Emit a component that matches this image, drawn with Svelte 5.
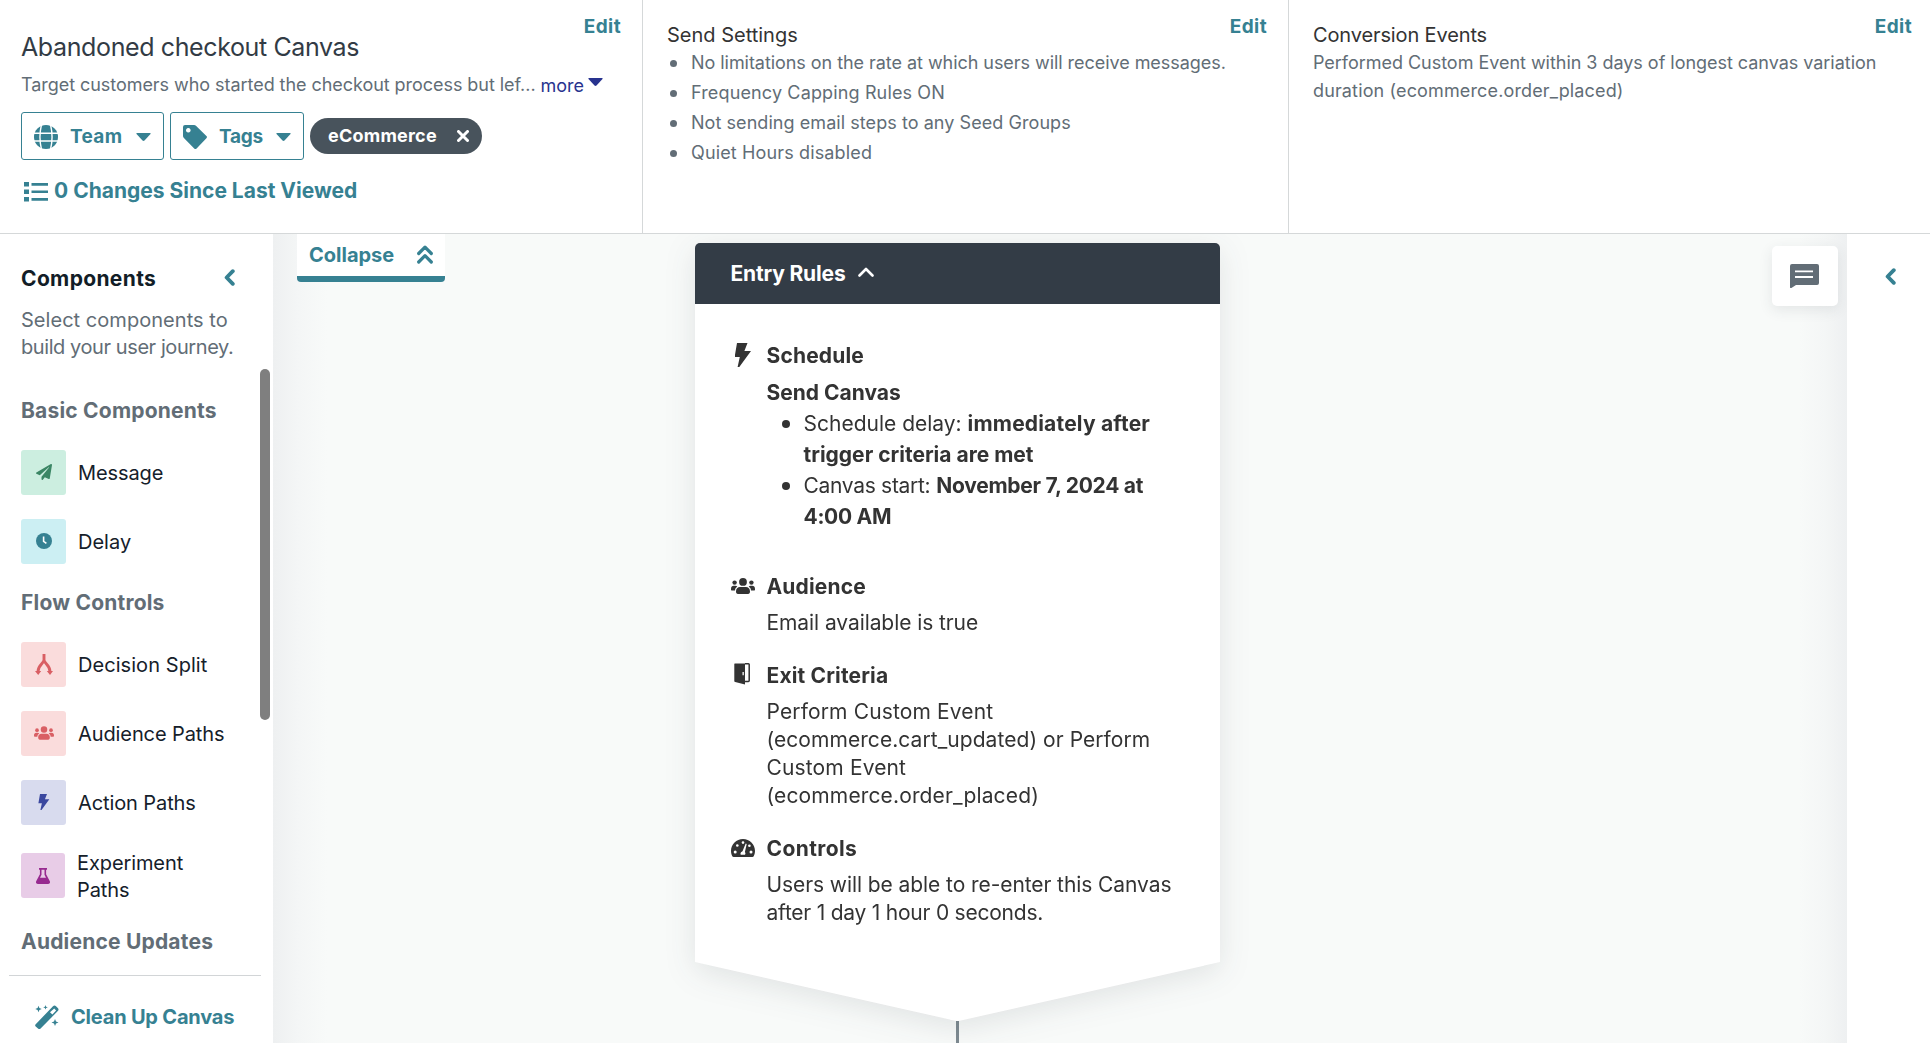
<script>
  const bolt = 'M6 0h10.5L13.4 8H20L8.3 24H6.6L8.8 14H3.6Z';
  const basics = [
    { label: 'Message', icon: 'plane', tone: 'green', fit: 'tight1' },
    { label: 'Delay', icon: 'clock', tone: 'cyan', fit: '' }
  ];
  const flows = [
    { label: 'Decision Split', icon: 'split', tone: 'red', fit: 'loose' },
    { label: 'Audience Paths', icon: 'users', tone: 'red', fit: 'tight1' },
    { label: 'Action Paths', icon: 'bolt', tone: 'blue', fit: 'tight1' },
    { label: 'Experiment Paths', icon: 'flask', tone: 'purple', fit: 'tight1' }
  ];
</script>

{#snippet glyph(name)}
  {#if name === 'plane'}
    <svg class="g16" viewBox="0 0 512 512"><path d="M476 3 12 271c-18 11-16 35 2 43l106 44L408 105c6-5 13 3 9 8L176 407v80c0 24 28 33 42 16l64-77 125 52c14 6 30-3 33-18L512 28c3-20-18-35-36-25z" /></svg>
  {:else if name === 'clock'}
    <svg class="g16" viewBox="0 0 16 16"><circle cx="8" cy="8" r="8" /><path class="cut" d="M7.6 3.4v5l2.8 1.9" /></svg>
  {:else if name === 'split'}
    <svg class="gsplit" viewBox="0 0 18 21"><path class="ln" d="M9 0v6c0 3.300-6 5-6 11.500M9 6c0 3.300 6 5 6 11.500" /><path d="M0 17h6.200l-3 4zM11.800 17H18l-3 4z" /></svg>
  {:else if name === 'users'}
    <svg class="gusers" viewBox="0 0 24 16"><circle cx="12" cy="3.900" r="3.900" /><circle cx="3.600" cy="4.600" r="2.200" /><circle cx="20.400" cy="4.600" r="2.200" /><path d="M5 13.500C5 10.500 6.700 9 9 9h6c2.300 0 4 1.500 4 4.500 0 1.500-.6 2.500-2 2.500H7c-1.400 0-2-1-2-2.500zM0 11c0-2 1.100-3.200 2.800-3.200h1.500c.9 0 1.500.3 2 .7C4.700 9.600 4 11 4 12.600H1c-.7 0-1-.4-1-1zM24 11c0-2-1.100-3.200-2.800-3.200h-1.500c-.9 0-1.500.3-2 .7 1.600 1.100 2.300 2.500 2.300 4.100h3c.7 0 1-.4 1-1z" /></svg>
  {:else if name === 'bolt'}
    <svg class="g16" viewBox="0 0 24 24"><path d={bolt} /></svg>
  {:else if name === 'flask'}
    <svg class="g16 flask" viewBox="0 0 14 16"><path fill-rule="evenodd" d="M3 0h8v1.700h-.9v4.600l3.600 6.700c.8 1.500.1 3-1.500 3H1.800c-1.600 0-2.300-1.500-1.500-3l3.600-6.700V1.700H3zM5.500 1.700v5L4 9.700h6L8.500 6.700v-5z" /></svg>
  {/if}
{/snippet}

{#snippet row(item)}
  <div class="item {item.tone}">
    <span class="tile">{@render glyph(item.icon)}</span>
    <span class="label {item.fit}">{item.label}</span>
  </div>
{/snippet}

<div class="page">
  <header>
    <section class="summary">
      <a class="edit">Edit</a>
      <h1>Abandoned checkout Canvas</h1>
      <div class="desc">
        <span class="blurb">Target customers who started the checkout process but lef...</span>
        <span class="more">more</span>
        <svg class="morecaret" viewBox="0 0 15 8"><path d="M1 0h13q1 .3.500 1L8.500 7.500q-1 .8-2 0L.5 1Q0 .3 1 0z" /></svg>
      </div>
      <div class="chips">
        <button class="team">
          <svg class="i24" viewBox="0 0 24 24"><circle cx="12" cy="12" r="12" /><path class="cutline" d="M0 8.200h24M0 16h24M7.400 0C5.700 7 5.700 17 7.400 24M16.600 0c1.700 7 1.700 17 0 24" /></svg>
          <span>Team</span>
          <svg class="caret" viewBox="0 0 15 8"><path d="M1 0h13q1 .3.500 1L8.500 7.500q-1 .8-2 0L.5 1Q0 .3 1 0z" /></svg>
        </button>
        <button class="tags">
          <svg class="i24" viewBox="0 0 24 24"><path fill-rule="evenodd" d="M0 2Q0 0 2 0h9q1.300 0 2.200.9l10.200 10q1.200 1.200 0 2.400L13.600 23.400q-1.200 1.100-2.400 0L.9 13Q0 12.200 0 11zM5.300 3a2.300 2.300 0 1 0 .01 0z" /></svg>
          <span>Tags</span>
          <svg class="caret" viewBox="0 0 15 8"><path d="M1 0h13q1 .3.500 1L8.500 7.500q-1 .8-2 0L.5 1Q0 .3 1 0z" /></svg>
        </button>
        <span class="pill"><span>eCommerce</span><svg viewBox="0 0 12 12"><path d="M1.500 1.500l9 9M10.500 1.500l-9 9" /></svg></span>
      </div>
      <a class="changes">
        <svg viewBox="0 0 24 20"><path d="M0 0h5v4.600H0zM0 7.500h5v4.600H0zM0 15h5v4.600H0zM7.500 1H24v2.800H7.500zM7.500 8.500H24v2.500H7.500zM7.500 16H24v2.800H7.500z" /></svg>
        <span>0 Changes Since Last Viewed</span>
      </a>
    </section>
    <section class="col">
      <a class="edit">Edit</a>
      <h2>Send Settings</h2>
      <ul>
        <li class="t1">No limitations on the rate at which users will receive messages.</li>
        <li class="loose2">Frequency Capping Rules ON</li>
        <li class="loose">Not sending email steps to any Seed Groups</li>
        <li class="loose2">Quiet Hours disabled</li>
      </ul>
    </section>
    <section class="col last">
      <a class="edit">Edit</a>
      <h2 class="tight2">Conversion Events</h2>
      <p>Performed Custom Event within 3 days of longest canvas variation<br /><span class="loose2">duration (ecommerce.order_placed)</span></p>
    </section>
  </header>

  <main>
    <aside>
      <div class="top">
        <div class="heading">Components <svg class="chev" viewBox="0 0 11 17"><path d="M8.800 2.200 2.600 8.500l6.200 6.300" /></svg></div>
        <p>Select components to<br /><span class="tight5">build your user journey.</span></p>
      </div>
      <div class="scroll">
        <h3>Basic Components</h3>
        <div class="items">{#each basics as item}{@render row(item)}{/each}</div>
        <h3 class="flow">Flow Controls</h3>
        <div class="items">{#each flows as item}{@render row(item)}{/each}</div>
        <h3 class="upd">Audience Updates</h3>
        <div class="thumb"></div>
      </div>
      <div class="clean">
        <svg viewBox="0 0 24 24"><path fill-rule="evenodd" d="M.7 19.200 18 1.300q1.500-1.500 3 0l1.800 1.800q1.500 1.500 0 3L5.600 23.400q-1.300 1.200-2.600 0L.7 21.500Q-.4 20.400.7 19.200zM15 7.300l2.400 2.300 3.700-4-1.900-2z" /><path d="M3.500.8l.9 2.300 2.300.9-2.300.9-.9 2.300-.9-2.300L.300 4l2.300-.9zM10.500 0l.6 1.700 1.700.6-1.700.6-.6 1.700-.6-1.700-1.700-.6 1.700-.6zM20 14l1 2.500 2.500 1-2.500 1-1 2.500-1-2.500-2.500-1 2.500-1z" /></svg>
        <span>Clean Up Canvas</span>
      </div>
    </aside>

    <div class="canvas">
      <div class="collapse"><span>Collapse</span><svg viewBox="0 0 16 19"><path d="M1.700 8.500 8 2.200l6.300 6.300M1.700 17 8 10.700l6.300 6.300" /></svg></div>
      <div class="node">
        <div class="card">
          <div class="cardhead"><span>Entry Rules</span><svg viewBox="0 0 16 10"><path d="M1.500 8.500 8 2l6.500 6.500" /></svg></div>
          <div class="cardbody">
            <div class="rule sched">
              <svg class="bolt" viewBox="4 0 16 24"><path d={bolt} /></svg>
              <div>
                <h4>Schedule</h4>
                <b class="send">Send Canvas</b>
                <ul>
                  <li>Schedule delay: <b class="wide">immediately after</b><br /><b>trigger criteria are met</b></li>
                  <li><span class="tight4">Canvas start:</span> <b class="date">November 7, 2024 at</b><br /><b class="tight4">4:00 AM</b></li>
                </ul>
              </div>
            </div>
            <div class="rule aud">
              {@render glyph('users')}
              <div><h4>Audience</h4><p class="tight0">Email available is true</p></div>
            </div>
            <div class="rule exit">
              <svg class="door" viewBox="0 0 16 22"><path d="M.8.5H11V21.500L1.200 19Q.3 18.800.3 18V1.300Q.3.500.8.500z" /><path class="frame" d="M11 .8h3.400q.8 0 .8.800v16q0 .8-.8.800H11" /><path class="knob" d="M8.500 9h1.300v3.200H8.500z" /></svg>
              <div><h4>Exit Criteria</h4><p><span class="loose2">Perform Custom Event</span><br /><span class="loose">(ecommerce.cart_updated) or Perform</span><br /><span class="loose2">Custom Event</span><br /><span class="loose2">(ecommerce.order_placed)</span></p></div>
            </div>
            <div class="rule">
              <svg class="gauge" viewBox="0 0 24 18"><path d="M12 0C5.400 0 0 5.200 0 11.800c0 2.100.5 3.800 1.300 5.400.3.500.7.800 1.300.8h18.800c.6 0 1-.3 1.300-.8.8-1.600 1.300-3.300 1.300-5.400C24 5.200 18.600 0 12 0z" /><circle class="dot" cx="4.200" cy="13" r="1.500" /><circle class="dot" cx="6.300" cy="6.500" r="1.300" /><circle class="dot" cx="12" cy="3.600" r="1.300" /><circle class="dot" cx="18.400" cy="6.800" r="1.300" /><circle class="dot" cx="20" cy="13" r="1.500" /><path class="dot" d="M14.700 4.500l1 .4-1.800 8q1 1.300.1 2.800H9.700q-.9-2.500 1.800-3.500z" /></svg>
              <div><h4 class="ctl">Controls</h4><p><span class="tight0">Users will be able to re-enter this Canvas</span><br /><span class="tight2">after 1 day 1 hour 0 seconds.</span></p></div>
            </div>
          </div>
          <svg class="tip" viewBox="0 0 525 59"><path d="M0 0H525L267 58.300Q262.500 59.500 258 58.300Z" /></svg>
        </div>
        <div class="stem"></div>
      </div>
      <div class="chat"><svg viewBox="0 0 29 24"><path d="M2 0h25q2 0 2 2v17q0 2-2 2H6l-4.600 3Q0 24.500 0 23V2Q0 0 2 0z" /><path class="lines" d="M5 7.300h18M5 13h18" /></svg></div>
    </div>

    <div class="right"><svg class="chev" viewBox="0 0 11 17"><path d="M8.800 2.200 2.600 8.500l6.200 6.300" /></svg></div>
  </main>
</div>

<style>
  :global(body) { margin: 0; overflow: hidden; }
  .page { width: 1930px; height: 1046px; overflow: hidden; display: flex; flex-direction: column; background: #fff; font-family: Inter, sans-serif; color: #333; white-space: nowrap; }
  h1, h2, h3, h4, p, ul { margin: 0; padding: 0; font-weight: 400; }
  svg { display: block; flex: none; fill: currentColor; }
  b { font-weight: 700; letter-spacing: 0; }
  .loose { letter-spacing: 0.06px; }
  .loose2 { letter-spacing: 0.14px; }
  .tight0 { letter-spacing: -0.08px; }
  .tight1 { letter-spacing: -0.1px; }
  .tight2 { letter-spacing: -0.23px; }
  .tight4 { letter-spacing: -0.3px; }
  .tight5 { letter-spacing: -0.42px; }
  b.wide { letter-spacing: 0.18px; }
  b.date { letter-spacing: -0.26px; }

  header { flex: none; height: 233px; display: grid; grid-template-columns: 642px 646px 1fr; border-bottom: 1px solid #d5d8d9; position: relative; z-index: 2; background: #fff; }
  section { position: relative; box-sizing: border-box; }
  .edit { position: absolute; top: 15px; right: 21px; font-size: 19px; line-height: 24px; font-weight: 700; letter-spacing: 0.4px; color: #368192; }
  .summary { padding: 32px 0 0 21px; }
  h1 { font-size: 25px; line-height: 30px; letter-spacing: -0.38px; color: #323b45; }
  .desc { display: flex; margin-top: 9px; font-size: 18px; line-height: 28px; letter-spacing: -0.05px; color: #626d76; }
  .more { color: #28338f; margin: 1px 4px 0 5px; letter-spacing: 0; }
  .morecaret { width: 15px; height: 8px; color: #28338f; margin-top: 7px; }
  .chips { display: flex; align-items: center; margin-top: 12px; height: 48px; }
  button { box-sizing: border-box; height: 48px; border: 1.300px solid #368192; border-radius: 3px; background: #fff; display: flex; align-items: center; padding: 1px 0 0 12px; font: 700 19px/24px Inter, sans-serif; color: #368192; margin-right: 6px; letter-spacing: 0.3px; }
  .team { width: 143px; }
  .tags { width: 134px; }
  .i24 { width: 24px; height: 24px; margin-right: 12px; }
  .team span { width: 66px; text-align: left; }
  .tags span { width: 57px; text-align: left; letter-spacing: -0.3px; }
  .caret { width: 15px; height: 8px; }
  .cutline { fill: none; stroke: #fff; stroke-width: 1.400; }
  .pill { display: flex; align-items: center; box-sizing: border-box; width: 172px; height: 36px; border-radius: 18px; background: #48535c; color: #fff; font-weight: 700; font-size: 18px; line-height: 24px; padding-left: 18px; letter-spacing: 0.22px; }
  .pill span { width: 129px; }
  .pill svg { width: 12px; height: 12px; }
  .pill path { stroke: #fff; stroke-width: 3; stroke-linecap: round; }
  .changes { display: flex; align-items: center; gap: 6px; margin: 16px 0 0 3px; font-size: 21px; line-height: 30px; font-weight: 700; letter-spacing: 0; color: #368192; }
  .changes svg { width: 24px; height: 20px; margin-top: 2px; }
  .col { border-left: 1px solid #d5d8d9; padding: 21px 0 0 24px; }
  .last .edit { right: 18px; }
  h2 { font-size: 20px; line-height: 28px; color: #333; }
  h2.tight2 { letter-spacing: -0.13px; }
  .col ul, .col p { font-size: 18px; color: #626d76; line-height: 30px; }
  .col ul { list-style: none; margin-top: -1px; }
  .col p { line-height: 28px; letter-spacing: -0.03px; }
  .t1 { letter-spacing: -0.05px; }
  li { display: flow-root; }
  .col li::before { content: ''; float: left; width: 7px; height: 7px; border-radius: 50%; background: #626d76; margin: 12px 14px 0 3px; }

  main { flex: 1; display: grid; grid-template-columns: 273px 1574px 1fr; min-height: 0; }
  aside { background: #fff; display: flex; flex-direction: column; color: #15202a; }
  .top { height: 135px; box-sizing: border-box; padding: 31px 38px 0 21px; }
  .heading { display: flex; justify-content: space-between; font-size: 21px; line-height: 27px; font-weight: 700; letter-spacing: 0.35px; color: #121d27; }
  .chev { width: 11px; height: 17px; margin-top: 4px; color: #368192; }
  .chev path { fill: none; stroke: #368192; stroke-width: 3.800; stroke-linecap: round; stroke-linejoin: round; }
  .top p { font-size: 20px; line-height: 27px; margin-top: 15px; color: #626d76; letter-spacing: 0.04px; }
  .scroll { position: relative; height: 606px; padding: 28px 0 0 21px; box-sizing: border-box; overflow: hidden; }
  h3 { font-size: 21px; line-height: 27px; font-weight: 700; letter-spacing: 0.2px; color: #626d76; margin-bottom: 26px; }
  .flow, .upd { margin-top: 25px; }
  .thumb { position: absolute; right: 3px; top: 0; width: 10px; height: 351px; border-radius: 5px; background: #7f7f7f; }
  .items { display: flex; flex-direction: column; gap: 24px; }
  .item { display: flex; align-items: center; gap: 12px; font-size: 20px; line-height: 27px; }
  .label { white-space: normal; width: 160px; padding-top: 1px; margin-bottom: -1px; }
  .tile { width: 45px; height: 45px; border-radius: 3px; display: flex; align-items: center; justify-content: center; flex: none; }
  .purple .tile { width: 44px; }
  .purple .label { width: 120px; }
  .green .tile { background: #cceee0; color: #3b8665; }
  .cyan .tile { background: #cceff3; color: #368192; }
  .red .tile { background: #fadcdc; color: #d95f64; }
  .blue .tile { background: #d8dbee; color: #3b489f; }
  .purple .tile { background: #e8cce7; color: #972a90; margin-top: -1px; }
  .g16 { width: 16px; height: 16px; margin-top: -2px; }
  .flask { width: 14px; margin: 1px 0 0; }
  .cut { fill: none; stroke: #fff; stroke-width: 1.600; }
  .gsplit { width: 18px; height: 21px; }
  .ln { fill: none; stroke: currentColor; stroke-width: 2.900; }
  .gusers { width: 20px; height: 14px; margin-top: -1px; }
  .clean { margin: 0 12px 0 9px; flex: 1; border-top: 1px solid #d2d5d7; display: flex; align-items: flex-start; gap: 12px; padding: 28px 0 0 26px; font-size: 20px; line-height: 27px; font-weight: 700; letter-spacing: -0.2px; color: #368192; }
  .clean svg { width: 24px; height: 24px; margin-top: 1px; }

  .canvas { position: relative; height: 809px; background: linear-gradient(90deg, #eef0f1, #f4f6f6 26px, #f8faf9 54px, #f8faf9 1526px, #f4f6f6 1552px, #eef0f1); overflow: hidden; }
  .collapse { position: absolute; left: 24px; top: 0; box-sizing: border-box; width: 148px; height: 48px; border-bottom: 6px solid #368192; border-radius: 0 0 4px 4px; background: #fff; display: flex; justify-content: space-between; padding: 9px 12px 0 12px; font-size: 20px; line-height: 24px; font-weight: 700; letter-spacing: 0; color: #368192; }
  .collapse svg { width: 16px; height: 19px; margin-top: 2px; }
  .collapse path { fill: none; stroke: #368192; stroke-width: 3.200; stroke-linecap: round; stroke-linejoin: round; }
  .node { position: absolute; left: 422px; top: 9px; width: 525px; display: flex; flex-direction: column; align-items: center; }
  .card { width: 525px; filter: drop-shadow(0 7px 15px rgba(40, 50, 55, 0.11)); }
  .cardhead { box-sizing: border-box; height: 61px; border-radius: 5px 5px 0 0; background: #333c46; color: #fff; display: flex; align-items: center; gap: 13px; padding-left: 35.500px; font-size: 21px; line-height: 28px; font-weight: 700; letter-spacing: -0.17px; }
  .cardhead svg { width: 16px; height: 10px; margin-top: -4px; }
  .cardhead path { fill: none; stroke: #fff; stroke-width: 2.600; stroke-linecap: round; stroke-linejoin: round; }
  .cardbody { box-sizing: border-box; height: 658px; background: #fff; padding: 38px 0 0 36px; display: flex; flex-direction: column; gap: 25px; font-size: 21px; line-height: 28px; }
  .rule { display: grid; grid-template-columns: 24px 1fr; column-gap: 11.500px; }
  .sched { margin-bottom: 16px; }
  h4 { font-size: 21px; line-height: 28px; font-weight: 700; margin-bottom: 8px; letter-spacing: 0.15px; }
  .ctl { letter-spacing: 0.4px; }
  .sched h4 { margin-bottom: 7px; }
  .send { display: block; line-height: 31px; }
  .rule ul { list-style: none; line-height: 31px; padding-left: 37px; }
  .rule li { position: relative; display: block; }
  .rule li::before { content: ''; position: absolute; left: -22px; top: 12px; width: 8px; height: 8px; border-radius: 50%; background: #333; }
  .bolt { width: 16px; height: 24px; margin: 1px 0 0 4px; }
  .aud :global(.gusers) { width: 24px; height: 16px; margin-top: 5px; }
  .door { width: 16px; height: 22px; margin: 1px 0 0 3px; }
  .frame { fill: none; stroke: #333; stroke-width: 1.500; }
  .knob, .dot { fill: #fff; }
  .gauge { width: 24px; height: 18px; margin-top: 4px; }
  .tip { width: 525px; height: 59px; color: #fff; }
  .stem { width: 3px; height: 40px; background: #7d8a91; }
  .chat { position: absolute; left: 1499px; top: 12px; width: 66px; height: 60px; border-radius: 5px; background: #fff; display: flex; align-items: center; justify-content: center; color: #626d76; box-shadow: 0 4px 14px rgba(50, 60, 70, 0.1); }
  .chat svg { width: 29px; height: 24px; margin-right: 2px; }
  .lines { fill: none; stroke: #fff; stroke-width: 1.800; }
  .right { background: #fff; padding: 30px 0 0 38px; }
</style>
